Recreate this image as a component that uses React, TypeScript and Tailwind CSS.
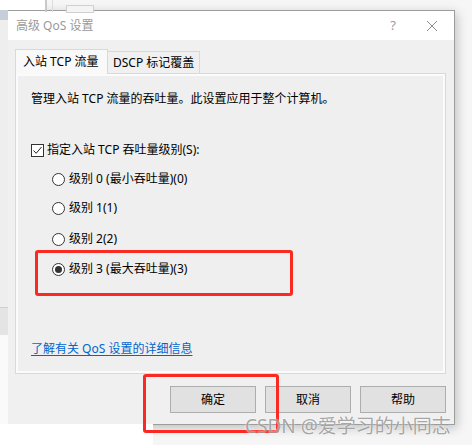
import React from 'react';

const font = { fontFamily: '"Noto Sans", "Noto Sans CJK SC", sans-serif' };

const Radio: React.FC<{ label: string; checked?: boolean; className?: string }> = ({ label, checked, className }) => (
  <div className={`flex items-center h-[16px] pl-[21px] ${className ?? ''}`}>
    <span className="w-[13px] h-[13px] rounded-full border border-[#333] bg-white flex items-center justify-center">
      {checked && <span className="w-[7px] h-[7px] rounded-full bg-[#333]" />}
    </span>
    <span className="ml-[4px] text-[12px] leading-[16px] text-[#000]">{label}</span>
  </div>
);

export default function App() {
  return (
    <div className="relative w-[472px] h-[445px] overflow-hidden bg-[#f6f6f6]" style={font}>
      {/* window behind the dialog */}
      <div className="absolute left-0 top-0 w-[46px] h-[10px] bg-white" />
      <div className="absolute left-[45px] top-0 w-[2px] h-[12px] bg-[#c9c9c9]" />
      <div className="absolute left-[52px] top-0 w-[1px] h-[12px] bg-[#dcdcdc]" />
      <div className="absolute left-[66px] top-[5px] w-[28px] h-[8px] border border-[#d0d0d0] bg-[#f4f4f4]" />
      <div className="absolute left-0 top-[10px] w-[8px] h-[10px] bg-[#c6ceda]" />
      <div className="absolute left-0 top-[20px] w-[8px] h-[287px] bg-[#eeeeee]" />
      <div className="absolute left-0 top-[307px] w-[8px] h-[28px] bg-[#e4e4e4] border-t border-[#cfcfcf]" />
      <div className="absolute left-0 top-[335px] w-[8px] h-[110px] bg-[#fafafa]" />
      <div className="absolute left-0 top-[424px] w-[153px] h-[21px] bg-white" />

      <div className="pt-[10px] pl-[7px]">
        <div className="w-[448px] h-[415px] border border-[#9c9c9c] bg-[#f0f0f0] flex flex-col shadow-[2px_3px_10px_rgba(0,0,0,0.22)]">
          {/* title bar */}
          <div className="h-[29px] bg-white flex items-center pl-[8px] pr-[14px]">
            <span className="text-[12px] text-[#9a9a9a] leading-[16px]">高级 QoS 设置</span>
            <span className="ml-auto mr-[30px] text-[13px] text-[#9a9a9a]">?</span>
            <svg width="12" height="12" viewBox="0 0 12 12" className="mr-[2px]">
              <path d="M1 1L11 11M11 1L1 11" stroke="#8c8c8c" strokeWidth="1" fill="none" />
            </svg>
          </div>

          <div className="flex-1 flex flex-col pt-[9px] pl-[7px] pr-[8px]">
            {/* tabs */}
            <div className="flex items-end h-[24px] relative z-10">
              <div className="h-[25px] w-[93px] bg-[#f9f9f9] border border-b-0 border-[#d9d9d9] flex items-center pl-[7px] text-[12px] text-black mb-[-1px]">
                入站 TCP 流量
              </div>
              <div className="h-[22px] w-[92px] bg-[#f0f0f0] border border-l-0 border-b-0 border-[#d9d9d9] flex items-center pl-[5px] text-[12px] text-black">
                DSCP 标记覆盖
              </div>
            </div>

            {/* panel */}
            <div className="h-[301px] w-[431px] border border-[#d9d9d9] bg-[#efefef] shadow-[inset_0_0_0_2px_#fbfbfb] flex flex-col pl-[15px] pt-[17px] pb-[16px]">
              <p className="text-[12px] leading-[16px] text-black">管理入站 TCP 流量的吞吐量。此设置应用于整个计算机。</p>

              <div className="flex items-center h-[16px] mt-[35px]">
                <span className="w-[13px] h-[13px] border border-[#333] bg-white flex items-center justify-center">
                  <svg width="11" height="11" viewBox="0 0 11 11">
                    <path d="M1.5 5.5L4.2 8.3L9.5 2" stroke="#222" strokeWidth="1" fill="none" />
                  </svg>
                </span>
                <span className="ml-[3px] text-[12px] leading-[16px] text-black">指定入站 TCP 吞吐量级别(S):</span>
              </div>

              <Radio label="级别 0 (最小吞吐量)(0)" className="mt-[13px]" />
              <Radio label="级别 1(1)" className="mt-[13px]" />
              <Radio label="级别 2(2)" className="mt-[15px]" />
              <Radio label="级别 3 (最大吞吐量)(3)" checked className="mt-[14px]" />

              <a className="mt-auto text-[12px] leading-[16px] text-[#0066cc] underline underline-offset-2 w-fit">
                了解有关 QoS 设置的详细信息
              </a>
            </div>

            {/* buttons */}
            <div className="flex justify-end gap-[9px] mt-[12px]">
              {['确定', '取消', '帮助'].map((t) => (
                <button
                  key={t}
                  className="w-[86px] h-[27px] bg-[#e1e1e1] border border-[#adadad] text-[12px] text-black flex items-center justify-center"
                >
                  {t}
                </button>
              ))}
            </div>
          </div>
        </div>
      </div>

      {/* annotations */}
      <div className="absolute left-[35px] top-[250px] w-[258px] h-[46px] border-[3px] border-[#fa2a22] rounded-[3px]" />
      <div className="absolute left-[143px] top-[374px] w-[136px] h-[59px] border-[3px] border-[#fa2a22] rounded-[3px]" />
      <div className="absolute left-[245px] top-[414px] text-[19px] leading-[24px] text-[rgba(130,130,130,0.7)] whitespace-nowrap [text-shadow:0_0_2px_#fff]">
        CSDN @爱学习的小同志
      </div>
    </div>
  );
}
